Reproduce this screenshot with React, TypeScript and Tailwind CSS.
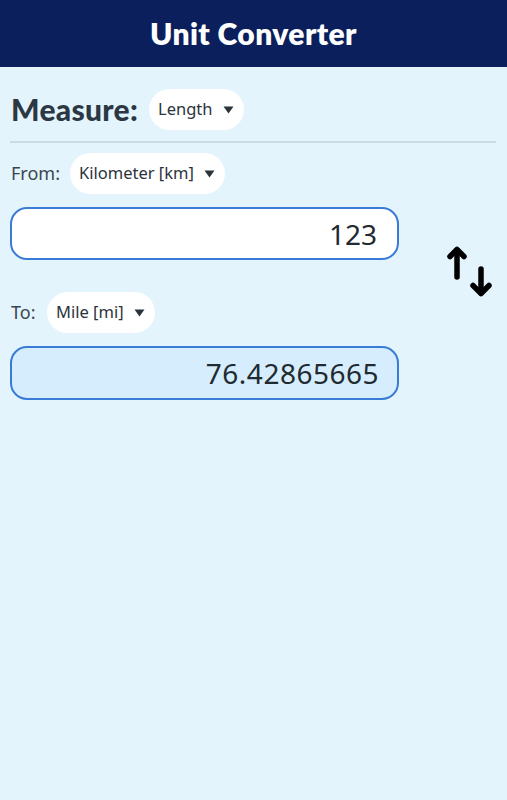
import React from "react";

function Caret() {
  return (
    <svg width="11" height="8" viewBox="0 0 11 8" className="ml-[10px]">
      <path d="M0.5 0.5 H10.5 L5.5 7.5 Z" fill="#2b333b" />
    </svg>
  );
}

function Pill({ label, className }: { label: string; className?: string }) {
  return (
    <div
      className={
        "flex h-[41px] items-center rounded-full bg-white pl-[9px] pr-[10px] text-[16.5px] text-[#2b333b] " +
        (className ?? "")
      }
      style={{ fontFamily: "'Noto Sans', Roboto, sans-serif" }}
    >
      <span>{label}</span>
      <Caret />
    </div>
  );
}

export default function App() {
  return (
    <div className="min-h-[800px] w-full bg-[#e4f4fd]" style={{ fontFamily: "'Noto Sans', sans-serif" }}>
      <div className="flex h-[67px] items-center justify-center bg-[#0a1f5c]">
        <h1
          className="text-[30px] text-white tracking-[0.4px]"
          style={{ fontFamily: "Lato, 'Noto Sans', sans-serif", fontWeight: 800 }}
        >
          Unit Converter
        </h1>
      </div>
      <div className="px-[10px]">
        <div className="flex h-[63px] items-center pt-[22px] pb-0">
          <span
            className="ml-[1px] text-[30px] tracking-[0.3px] text-[#2b3843]"
            style={{ fontFamily: "Lato, sans-serif", fontWeight: 900 }}
          >
            Measure:
          </span>
          <Pill label="Length" className="ml-[11px]" />
        </div>
        <div className="mt-[11px] h-[2px] w-[486px] bg-[#c9dbe5]" />
        <div className="flex">
          <div className="w-[389px]">
            <div className="mt-[10px] flex items-center">
              <span className="ml-[1px] w-[59px] text-[18px] text-[#3c4650]">From:</span>
              <Pill label="Kilometer [km]" />
            </div>
            <div className="mt-[13px] flex h-[53px] items-center justify-end rounded-[17px] border-2 border-[#3a7bd5] bg-white pr-[20px] text-[28px] text-[#222a31]">
              123
            </div>
            <div className="mt-[32px] flex items-center">
              <span className="ml-[1px] w-[36px] text-[18px] text-[#3c4650]">To:</span>
              <Pill label="Mile [mi]" />
            </div>
            <div className="mt-[13px] flex h-[54px] items-center justify-end rounded-[17px] border-2 border-[#3a7bd5] bg-[#d5edfc] pr-[18px] text-[28px] tracking-[0.5px] text-[#222a31]">
              76.42865665
            </div>
          </div>
          <div className="flex-1 pt-[101px] pl-[46px]">
            <svg width="52" height="58" viewBox="0 0 52 58">
              <g stroke="#000" strokeWidth="5.5" strokeLinecap="round" strokeLinejoin="round" fill="none">
                <path d="M12 6 V33" />
                <path d="M5 12.5 L12 5.5 L19 12.5" />
                <path d="M36 25 V49" />
                <path d="M28 41.5 L36 49.5 L44 41.5" />
              </g>
            </svg>
          </div>
        </div>
      </div>
    </div>
  );
}
